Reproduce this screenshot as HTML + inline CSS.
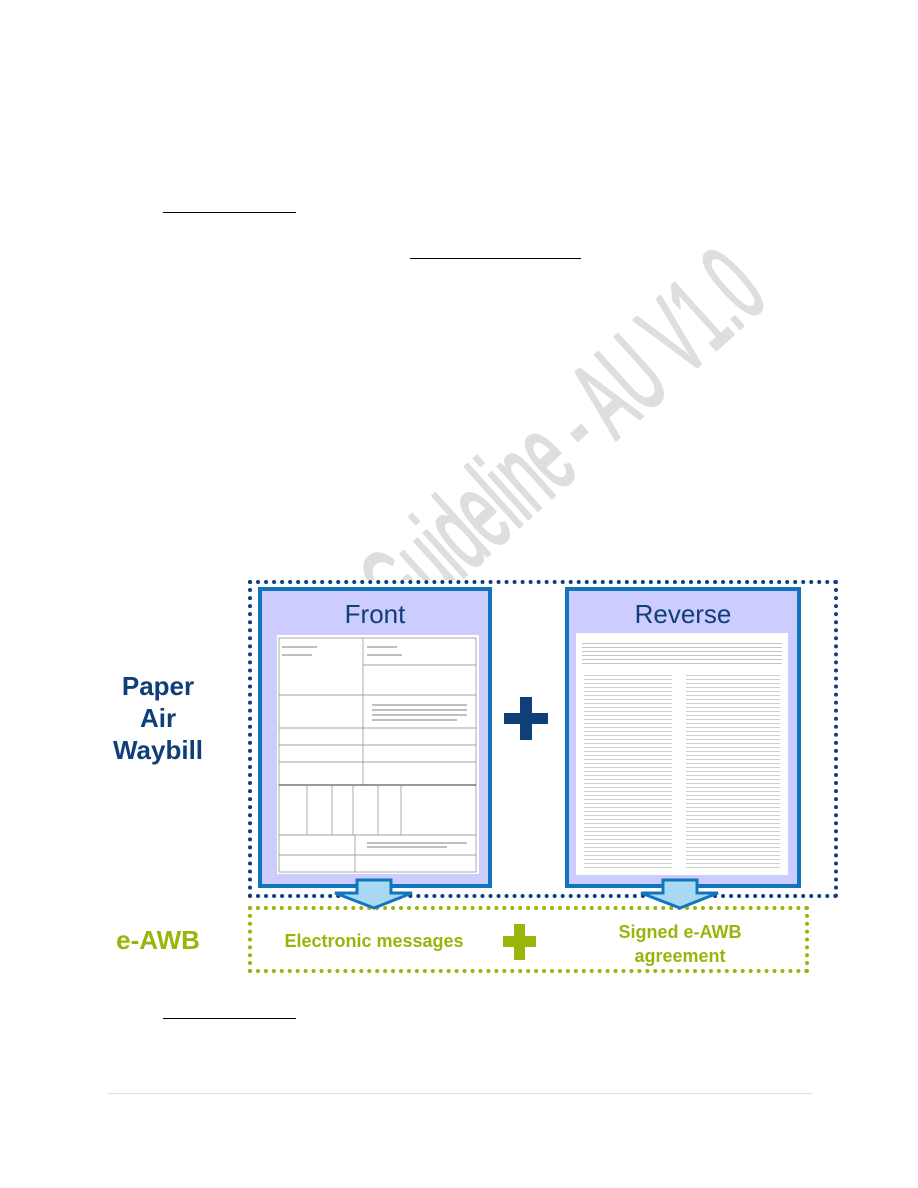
<!DOCTYPE html>
<html><head><meta charset="utf-8"><style>
body{margin:0;background:#fff;}
.page{position:relative;width:918px;height:1188px;overflow:hidden;font-family:"Liberation Sans",Arial,sans-serif;}
.abs{position:absolute;}
.ul{position:absolute;height:1px;background:#000;}
.box{position:absolute;background:#ccccff;border:4px solid #1274bd;box-sizing:border-box;}
.ttl{position:absolute;width:100%;text-align:center;color:#0f3f78;font-size:26px;top:8px;}
.doc{position:absolute;background:#fff;}
.lbl{position:absolute;font-weight:bold;text-align:center;}
</style></head><body><div class="page">

<svg class="abs" style="left:0;top:0" width="918" height="1188">
<g transform="translate(405,630) rotate(-42) scale(0.5,1)">
<text x="0" y="0" font-family="Liberation Sans, sans-serif" font-size="112" fill="#dedede" stroke="#dedede" stroke-width="3" stroke-linejoin="round">Guideline - AU V1.0</text>
</g>
</svg>

<div class="ul" style="left:163px;top:212px;width:133px"></div>
<div class="ul" style="left:410px;top:258px;width:171px"></div>
<div class="ul" style="left:163px;top:1018px;width:133px"></div>
<div class="abs" style="left:107px;top:1093px;width:706px;height:1px;background:#e0e0e0"></div>

<div class="abs" style="left:248px;top:580px;width:590px;height:318px;box-sizing:border-box;border:4px dotted #0f3f78;background:#fff"></div>

<div class="box" style="left:258px;top:587px;width:234px;height:301px">
  <div class="ttl">Front</div>
</div>
<div class="doc" style="left:277px;top:635px;width:202px;height:239px">
<svg width="202" height="239" viewBox="0 0 202 239" fill="none" stroke="#888" stroke-width="0.7">
<rect x="2" y="3" width="197" height="234"/>
<line x1="86" y1="3" x2="86" y2="150"/>
<line x1="2" y1="60" x2="199" y2="60"/>
<line x1="86" y1="30" x2="199" y2="30"/>
<line x1="2" y1="93" x2="199" y2="93"/>
<line x1="2" y1="110" x2="199" y2="110"/>
<line x1="2" y1="127" x2="199" y2="127"/>
<line x1="2" y1="150" x2="199" y2="150" stroke="#333" stroke-width="1"/>
<line x1="30" y1="150" x2="30" y2="200"/>
<line x1="55" y1="150" x2="55" y2="200"/>
<line x1="76" y1="150" x2="76" y2="200"/>
<line x1="101" y1="150" x2="101" y2="200"/>
<line x1="124" y1="150" x2="124" y2="200"/>
<line x1="2" y1="200" x2="199" y2="200"/>
<line x1="78" y1="200" x2="78" y2="237"/>
<line x1="2" y1="220" x2="199" y2="220"/>
<g stroke="#aaa" stroke-width="1.5">
<line x1="95" y1="70" x2="190" y2="70"/><line x1="95" y1="75" x2="190" y2="75"/><line x1="95" y1="80" x2="190" y2="80"/><line x1="95" y1="85" x2="180" y2="85"/>
<line x1="90" y1="208" x2="190" y2="208"/><line x1="90" y1="212" x2="170" y2="212"/>
<line x1="5" y1="12" x2="40" y2="12"/><line x1="5" y1="20" x2="35" y2="20"/><line x1="90" y1="12" x2="120" y2="12"/><line x1="90" y1="20" x2="125" y2="20"/>
</g>
</svg></div>

<div class="box" style="left:565px;top:587px;width:236px;height:301px">
  <div class="ttl">Reverse</div>
</div>
<div class="doc" style="left:576px;top:633px;width:212px;height:242px">
<div class="abs" style="left:6px;top:8px;width:200px;height:26px;background:repeating-linear-gradient(#fff 0 2px,#c4c4c4 2px 3px,#fff 3px 4px)"></div>
<div class="abs" style="left:8px;top:40px;width:88px;height:195px;background:repeating-linear-gradient(#fff 0 2px,#cfcfcf 2px 3px,#fff 3px 4px)"></div>
<div class="abs" style="left:110px;top:40px;width:94px;height:195px;background:repeating-linear-gradient(#fff 0 2px,#cfcfcf 2px 3px,#fff 3px 4px)"></div>
</div>

<div class="abs" style="left:504px;top:713px;width:44px;height:11px;background:#0f3f78"></div>
<div class="abs" style="left:520px;top:697px;width:12px;height:43px;background:#0f3f78"></div>

<div class="abs" style="left:248px;top:906px;width:561px;height:67px;box-sizing:border-box;border:4px dotted #9ab40a;"></div>

<svg class="abs" style="left:330px;top:878px" width="90" height="32"><path d="M27 2 H61 V15 H82 L44 30 L5 15 H27 Z" fill="#a8d8f2" stroke="#1274bd" stroke-width="3"/></svg>
<svg class="abs" style="left:636px;top:878px" width="90" height="32"><path d="M27 2 H61 V15 H82 L44 30 L5 15 H27 Z" fill="#a8d8f2" stroke="#1274bd" stroke-width="3"/></svg>

<div class="lbl" style="left:274px;top:931px;width:200px;color:#9ab40a;font-size:18px">Electronic messages</div>
<div class="abs" style="left:503px;top:936px;width:33px;height:11px;background:#9ab40a"></div>
<div class="abs" style="left:514px;top:924px;width:11px;height:36px;background:#9ab40a"></div>
<div class="lbl" style="left:590px;top:920px;width:180px;color:#9ab40a;font-size:18px;line-height:24px">Signed e-AWB<br>agreement</div>

<div class="lbl" style="left:100px;top:670px;width:116px;color:#0f3f78;font-size:26px;line-height:32px">Paper<br>Air<br>Waybill</div>
<div class="lbl" style="left:100px;top:925px;width:116px;color:#9ab40a;font-size:26px">e-AWB</div>
</div></body></html>
